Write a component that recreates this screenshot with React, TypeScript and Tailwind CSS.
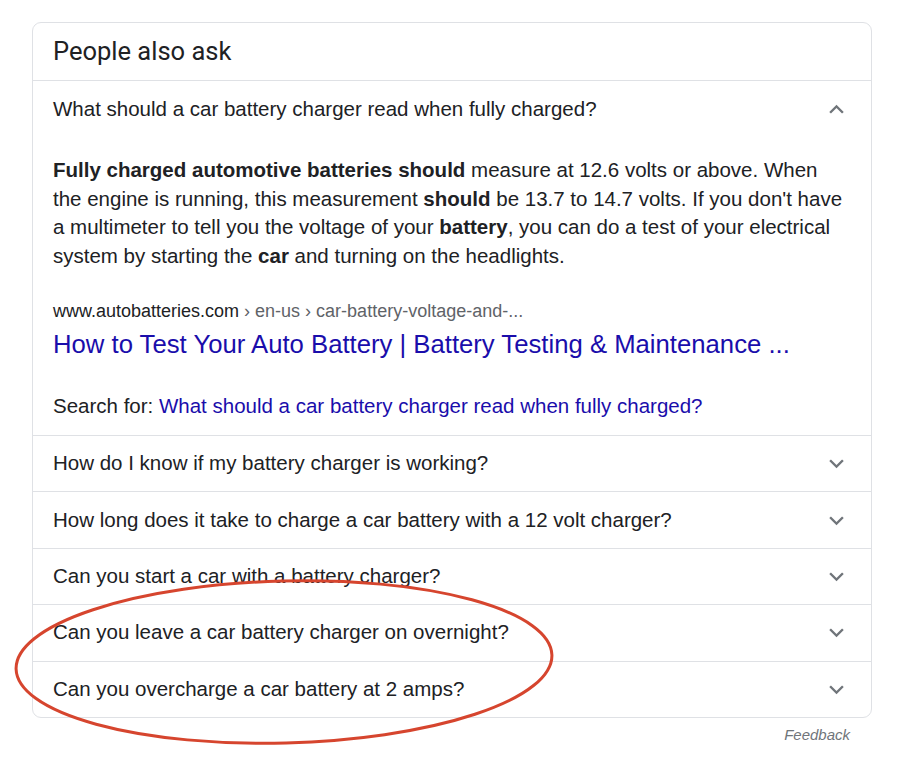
import React from "react";

const Chevron = ({ up = false }: { up?: boolean }) => (
  <svg width="29" height="29" viewBox="0 0 24 24" className="shrink-0" fill="#70757a">
    {up ? (
      <path d="M7.41 15.41L12 10.83l4.59 4.58L18 14l-6-6-6 6z" />
    ) : (
      <path d="M16.59 8.59L12 13.17 7.41 8.59 6 10l6 6 6-6z" />
    )}
  </svg>
);

const questions = [
  "How do I know if my battery charger is working?",
  "How long does it take to charge a car battery with a 12 volt charger?",
  "Can you start a car with a battery charger?",
  "Can you leave a car battery charger on overnight?",
  "Can you overcharge a car battery at 2 amps?",
];

export default function App() {
  return (
    <div
      className="relative w-[900px] h-[775px] bg-white overflow-hidden"
      style={{ fontFamily: '"Liberation Sans", Arial, sans-serif' }}
    >
      <div className="pt-[22px] pl-[32px]">
        <div className="w-[840px] border border-[#dfe1e5] rounded-[9px] text-[#202124]">
          <div
            className="h-[57px] flex items-center pl-[20px] text-[25.5px] text-[#202124]"
            style={{ fontFamily: 'Roboto, "Open Sans", sans-serif' }}
          >
            People also ask
          </div>
          <div className="border-t border-[#dfe1e5]">
            <div className="h-[56px] flex items-center justify-between pl-[20px] pr-[20px] text-[20.5px]">
              <span>What should a car battery charger read when fully charged?</span>
              <Chevron up />
            </div>
            <div className="pl-[20px] pr-[20px] pt-[19px]">
              <p className="text-[20.5px] leading-[28.5px] w-[800px] whitespace-nowrap">
                <b>Fully charged automotive batteries should</b> measure at 12.6 volts or above. When
                <br />
                the engine is running, this measurement <b>should</b> be 13.7 to 14.7 volts. If you
                don't have
                <br />a multimeter to tell you the voltage of your <b>battery</b>, you can do a test
                of your electrical
                <br />
                system by starting the <b>car</b> and turning on the headlights.
              </p>
              <div className="mt-[29px] text-[18px] leading-[24px]">
                <span className="text-[#202124]">www.autobatteries.com</span>
                <span className="text-[#5f6368]"> › en-us › car-battery-voltage-and-...</span>
              </div>
              <div className="mt-[4px] text-[25.7px] leading-[34px] text-[#1a0dab]">
                How to Test Your Auto Battery | Battery Testing &amp; Maintenance ...
              </div>
              <div className="mt-[31px] pb-[15px] text-[20.5px] leading-[28px]">
                <span>Search for: </span>
                <span className="text-[#1a0dab]">
                  What should a car battery charger read when fully charged?
                </span>
              </div>
            </div>
          </div>
          {questions.map((q) => (
            <div
              key={q}
              className="h-[56.4px] border-t border-[#dfe1e5] flex items-center justify-between pl-[20px] pr-[20px] text-[20.5px]"
            >
              <span>{q}</span>
              <Chevron />
            </div>
          ))}
        </div>
        <div className="w-[818px] flex justify-end mt-[6px]">
          <span className="italic text-[15px] text-[#70757a]">Feedback</span>
        </div>
      </div>
      <svg
        className="absolute left-0 top-0 pointer-events-none"
        width="900"
        height="775"
        viewBox="0 0 900 775"
      >
        <ellipse
          cx="284"
          cy="662"
          rx="268"
          ry="81"
          fill="none"
          stroke="#d6452e"
          strokeWidth="3"
          transform="rotate(-1.5 284 662)"
        />
      </svg>
    </div>
  );
}
